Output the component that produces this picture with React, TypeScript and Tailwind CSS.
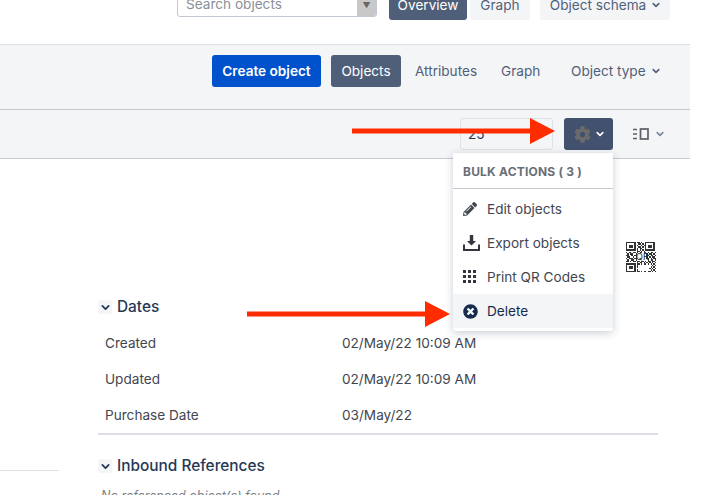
import React from "react";
import { FaPencilAlt, FaTimesCircle, FaCog } from "react-icons/fa";

const font = { fontFamily: "Inter, 'Liberation Sans', sans-serif" };

function Chevron({ className = "", size = 8, stroke = "currentColor", width = 2 }: { className?: string; size?: number; stroke?: string; width?: number }) {
  return (
    <svg className={className} width={size} height={size} viewBox="0 0 10 10" fill="none">
      <path d="M1.5 3.2 5 6.7 8.5 3.2" stroke={stroke} strokeWidth={width} strokeLinecap="round" strokeLinejoin="round" />
    </svg>
  );
}

function Arrow({ className }: { className: string }) {
  return (
    <svg className={className} width="203" height="28" viewBox="0 0 203 28">
      <path d="M0 11.5H178V1L203 14 178 27V16.5H0Z" fill="#ff2c00" />
    </svg>
  );
}

const QR_ROWS = [
  "1111111011010011111110",
  "1000001001101010000010",
  "1011101010010110111010",
  "1011101001101010111010",
  "1000001010110010000010",
  "1111111010101011111110",
  "0000000011010100000000",
  "1011011010110110101101",
  "0101100100000001011010",
  "1100101100000001101101",
  "0110010100000001010110",
  "1011101100000001101011",
  "0100110100000000101101",
  "1101011011011010110110",
  "0000000010110101010101",
  "1111111011010110101010",
  "1000001010000000000101",
  "1011101010000000001010",
  "1011101000000000010101",
  "1000001010000000001010",
  "1111111011010110110101",
];

function QR() {
  return (
    <div className="relative w-[30px] h-[30px]">
      <svg width="30" height="30" viewBox="0 0 22 21" preserveAspectRatio="none" shapeRendering="crispEdges">
        {QR_ROWS.flatMap((r, y) =>
          r.split("").map((c, x) => (c === "1" ? <rect key={`${x}-${y}`} x={x} y={y} width="1" height="1" fill="#333" /> : null))
        )}
      </svg>
      <span className="absolute left-[10px] top-[9px] text-[9px] leading-[11px] text-[#222]">QR</span>
    </div>
  );
}

function MenuItem({ icon, label, active }: { icon: React.ReactNode; label: string; active?: boolean }) {
  return (
    <div className={`h-[34px] flex items-center pl-[10px] ${active ? "bg-[#f4f5f7] text-[#172b4d]" : "text-[#42464f]"}`}>
      <span className="w-[24px] flex items-center">{icon}</span>
      <span className="text-[13.6px] leading-[20px]">{label}</span>
    </div>
  );
}

function Row({ label, value }: { label: string; value: string }) {
  return (
    <div className="h-[36px] flex items-center pl-[7px] text-[13.6px] text-[#42464f]">
      <span className="w-[237px]">{label}</span>
      <span>{value}</span>
    </div>
  );
}

function SectionTitle({ children }: { children: React.ReactNode }) {
  return (
    <div className="flex items-center h-[20px]">
      <span className="w-[14px] h-[14px] rounded-[3px] bg-[#f4f5f7] flex items-center justify-center mr-[5px] text-[#253858]">
        <Chevron size={9} />
      </span>
      <span className="text-[15.4px] font-medium text-[#253858]">{children}</span>
    </div>
  );
}

export default function App() {
  return (
    <div className="relative w-[723px] h-[495px] overflow-hidden bg-white" style={font}>
      {/* top bar */}
      <div className="w-[690px] h-[45px] border-b border-[#dcdfe4] relative overflow-hidden">
        <div className="absolute left-[177px] right-[20px] bottom-[24px] flex items-end">
          <div className="w-[200px] h-[25px] mb-[3px] border border-[#c1c7d0] rounded-[3px] flex items-center justify-between overflow-hidden bg-white">
            <span className="pl-[8px] text-[13.6px] text-[#8b8f97]">Search objects</span>
            <span className="w-[19px] h-full bg-[#c8c8c8] flex items-center justify-center text-[8px] text-[#666]">▼</span>
          </div>
          <div className="ml-[12px] h-[30px] w-[78px] rounded-[3px] bg-[#505f79] text-white text-[13.6px] flex items-center justify-center">Overview</div>
          <div className="ml-[3px] h-[30px] w-[60px] rounded-[3px] bg-[#f4f5f7] text-[#505f79] text-[13.6px] flex items-center justify-center">Graph</div>
          <div className="ml-[10px] h-[30px] w-[130px] rounded-[3px] bg-[#f4f5f7] text-[#505f79] text-[13.6px] flex items-center justify-center gap-[6px]">
            Object schema <Chevron />
          </div>
        </div>
      </div>

      {/* action bar */}
      <div className="w-[690px] h-[65px] bg-[#f4f5f7] border-b border-[#c7c9cc] flex items-start pt-[10px] pl-[212px]">
        <div className="h-[32px] w-[109px] rounded-[3px] bg-[#0052cc] text-white text-[13.6px] font-semibold flex items-center justify-center">Create object</div>
        <div className="ml-[10px] h-[32px] w-[70px] rounded-[3px] bg-[#505f79] text-white text-[13.6px] flex items-center justify-center">Objects</div>
        <span className="ml-[14px] w-[86px] h-[32px] flex items-center text-[13.6px] text-[#505f79]">Attributes</span>
        <span className="w-[70px] h-[32px] flex items-center text-[13.6px] text-[#505f79]">Graph</span>
        <span className="h-[32px] text-[13.6px] text-[#505f79] flex items-center gap-[6px]">
          Object type <Chevron />
        </span>
      </div>

      {/* toolbar */}
      <div className="w-[690px] h-[49px] bg-[#f4f5f7] border-b border-[#c7c9cc] flex items-center pl-[460px]">
        <div className="w-[93px] h-[32px] border border-[#dfe1e6] rounded-[3px] bg-[#f4f5f7] pl-[7px] text-[13.6px] text-[#253858] flex items-center">25</div>
        <div className="ml-[11px] w-[49px] h-[32px] rounded-[3px] bg-[#42526e] flex items-center justify-center gap-[5px]">
          <FaCog size={17} color="#6b6b6b" />
          <Chevron stroke="#ffffff" />
        </div>
        <div className="ml-[20px] flex items-center gap-[6px]">
          <svg width="17" height="12" viewBox="0 0 17 12" fill="none">
            <path d="M0 1.5H4M0 6H4M0 10.5H4" stroke="#5a5f68" strokeWidth="1.5" />
            <rect x="7.5" y="1" width="7.5" height="10" stroke="#5a5f68" strokeWidth="1.7" />
          </svg>
          <Chevron stroke="#7a869a" />
        </div>
      </div>

      {/* body */}
      <div className="flex w-[690px]">
        <div className="w-[98px] pt-[311px] shrink-0">
          <div className="w-[59px] border-t border-[#dcdfe4]" />
        </div>
        <div className="w-[560px]">
          <div className="flex justify-end pt-[83px] pr-[2px]">
            <QR />
          </div>
          <div className="pt-[25px]">
            <SectionTitle>Dates</SectionTitle>
            <div className="mt-[8px]">
              <Row label="Created" value="02/May/22 10:09 AM" />
              <Row label="Updated" value="02/May/22 10:09 AM" />
              <Row label="Purchase Date" value="03/May/22" />
            </div>
            <div className="border-t-2 border-[#dcdfe4]" />
          </div>
          <div className="pt-[21px]">
            <SectionTitle>Inbound References</SectionTitle>
            <div className="mt-[11px] pl-[3px] text-[12.5px] italic text-[#7a7f88]">No referenced object(s) found</div>
          </div>
        </div>
      </div>

      {/* dropdown */}
      <div className="absolute left-[453px] top-[153px] w-[160px] h-[178px] bg-white rounded-b-[3px] shadow-[0_2px_8px_rgba(9,30,66,0.22)]">
        <div className="h-[36px] flex items-center pt-[2px] pl-[10px] border-b border-[#c7c9cc] text-[12px] font-bold text-[#6b6e76] tracking-[0.2px]">BULK ACTIONS ( 3 )</div>
        <div className="pt-[3px]">
          <MenuItem label="Edit objects" icon={<FaPencilAlt size={14} color="#42464f" />} />
          <MenuItem
            label="Export objects"
            icon={
              <svg width="17" height="16" viewBox="0 0 17 16" fill="#33363d">
                <path d="M6.8 0h3.4v6H13L8.5 10.6 4 6h2.8Z" />
                <path d="M0 9.5h2V14h13V9.5h2V16H0Z" />
              </svg>
            }
          />
          <MenuItem
            label="Print QR Codes"
            icon={
              <svg width="14" height="14" viewBox="0 0 14 14" fill="#33363d">
                {[0, 5, 10].flatMap((y) => [0, 5, 10].map((x) => <rect key={`${x}-${y}`} x={x} y={y} width="3" height="3" />))}
              </svg>
            }
          />
          <MenuItem label="Delete" active icon={<FaTimesCircle size={15} color="#172b4d" />} />
        </div>
      </div>

      {/* annotation arrows */}
      <Arrow className="absolute left-[352px] top-[117px]" />
      <Arrow className="absolute left-[247px] top-[300px]" />
    </div>
  );
}
